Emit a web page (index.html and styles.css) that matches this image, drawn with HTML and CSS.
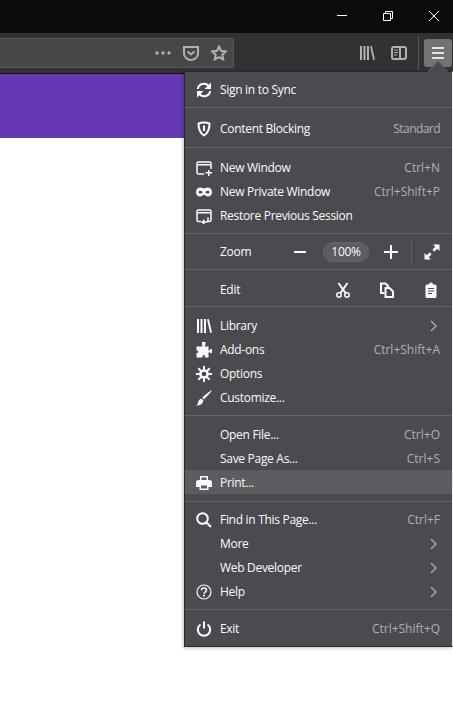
FILE: index.html
```html
<!DOCTYPE html>
<html lang="en">
<head>
<meta charset="utf-8">
<title>Menu</title>
<link rel="stylesheet" href="styles.css">
</head>
<body>
<div class="titlebar">
  <svg class="cap" viewBox="0 0 46 33" width="46" height="33"><path d="M18 15.500h10" stroke="#fff" fill="none"/></svg>
  <svg class="cap" viewBox="0 0 46 33" width="46" height="33"><path d="M18.500 13.500h7v7h-7zM20.500 13.500v-2h7v7h-2" stroke="#fff" fill="none"/></svg>
  <svg class="cap" viewBox="0 0 46 33" width="46" height="33"><path d="M18 11l10 10M28 11L18 21" stroke="#fff" fill="none"/></svg>
</div>
<div class="toolbar">
  <div class="urlbar">
    <svg class="tb-icon" viewBox="0 0 16 16"><circle cx="2" cy="8" r="1.700"/><circle cx="8" cy="8" r="1.700"/><circle cx="14" cy="8" r="1.700"/></svg>
    <svg class="tb-icon" viewBox="0 0 16 16"><path class="ln2" d="M1 2h14v6.500a7 6.500 0 0 1-14 0z"/><path class="ln2" d="M4.500 6.500L8 9.500l3.500-3"/></svg>
    <svg class="tb-icon" viewBox="0 0 16 16"><path class="ln2" d="M8 1.500l2 4.300 4.800.6-3.500 3.300.9 4.700L8 12.100l-4.200 2.300.9-4.700L1.200 6.400 6 5.800z"/></svg>
  </div>
  <div class="tb-right">
    <svg class="tb-icon lib" viewBox="0 0 16 16"><path d="M1 1h2v14H1zM4.500 1h2v14h-2zM8 1h2v14H8zM11 1.500l1.800-.6 3.200 13.500-1.800.6z"/></svg>
    <svg class="tb-icon side" viewBox="0 0 16 16"><rect class="ln2" x="1" y="2" width="14" height="12" rx="2"/><path class="ln2" d="M9 2v12"/><path d="M3 4.500h4v1H3zM3 7h4v1H3zM3 9.500h3v1H3z"/></svg>
    <div class="tb-sep"></div>
    <div class="hamburger"><span></span><span></span><span></span></div>
  </div>
</div>
<div class="banner"></div>

<div class="arrow"></div>
<nav class="menu">
  <section class="group g1">
    <div class="row"><svg class="ic" viewBox="0 0 16 16"><path class="ln2" d="M1.800 7a6.200 6.200 0 0 1 10.700-3.300M14.200 9a6.200 6.200 0 0 1-10.700 3.300"/><path d="M15 .5v6.500H8.500zM1 15.500V9h6.500z"/></svg><span class="label">Sign in to Sync</span></div>
  </section>
  <section class="group g2">
    <div class="row"><svg class="ic" viewBox="0 0 16 16"><path class="ln2" d="M8 1.500c2 0 4 .4 5.500 1.200 0 5.300-1.500 9.300-5.500 11.800-4-2.500-5.500-6.500-5.500-11.800C4 1.900 6 1.500 8 1.500z"/><path d="M7 4.500h2v5.500H7z"/></svg><span class="label">Content Blocking</span><span class="hint std">Standard</span></div>
  </section>
  <section class="group g3">
    <div class="row"><svg class="ic" viewBox="0 0 16 16"><path class="ln15" d="M8 14H2.500A1.500 1.500 0 0 1 1 12.500v-9A1.500 1.500 0 0 1 2.500 2h11A1.500 1.500 0 0 1 15 3.500V9"/><path d="M1 4h14v1.500H1zM12 10h1.500v2H16v1.500h-2.500V16H12v-2.500H9.500V12H12z"/></svg><span class="label">New Window</span><span class="hint">Ctrl+N</span></div>
    <div class="row"><svg class="ic" viewBox="0 0 16 16"><path fill-rule="evenodd" d="M4.500 3.500C6 3.500 7 4.500 8 4.500s2-1 3.500-1C14 3.500 16 5 16 8s-2 4.500-4 4.500c-2 0-3-1.800-4-1.800s-2 1.800-4 1.800c-2 0-4-1.500-4-4.500s2-4.500 4.500-4.500zM4.500 6.800c-1.200 0-2 .6-2 1.400S3.500 9.500 4.500 9.500s2-.7 2-1.300-.8-1.400-2-1.400zM11.500 6.800c-1.200 0-2 .8-2 1.400s1 1.300 2 1.300 2-.5 2-1.300-.8-1.400-2-1.400z"/></svg><span class="label">New Private Window</span><span class="hint">Ctrl+Shift+P</span></div>
    <div class="row"><svg class="ic" viewBox="0 0 16 16"><path class="ln15" d="M5 13.500H2.500A1.500 1.500 0 0 1 1 12V3.500A1.500 1.500 0 0 1 2.500 2h11A1.500 1.500 0 0 1 15 3.500V12a1.500 1.500 0 0 1-1.500 1.500H12"/><path d="M1 4h14v1.500H1z"/><path class="ln15" d="M12 9.500V12.500a1.500 1.500 0 0 1-1.500 1.500H7"/><path d="M8.500 11v6l-3.500-3z"/></svg><span class="label">Restore Previous Session</span></div>
  </section>
  <section class="group g4">
    <div class="row"><span class="label">Zoom</span>
      <div class="tools">
        <svg class="ic minus" viewBox="0 0 16 16"><path d="M2 7h12v2H2z"/></svg>
        <span class="pill">100%</span>
        <svg class="ic plus" viewBox="0 0 16 16"><path d="M7 1h2v6h6v2H9v6H7V9H1V7h6z"/></svg>
        <span class="vsep"></span>
        <svg class="ic full" viewBox="0 0 16 16"><path d="M9 0.500h6.500V7l-2.300-2.300-3 3L8.300 5.800l3-3zM7 15.500H.5V9l2.300 2.300 3-3 1.900 1.900-3 3z"/></svg>
      </div>
    </div>
  </section>
  <section class="group g5">
    <div class="row"><span class="label">Edit</span>
      <div class="tools edit">
        <svg class="ic" viewBox="0 0 16 16"><path class="ln2" d="M3.500 1l7 10M12.500 1l-7 10"/><circle class="ln15" cx="4" cy="13" r="2.200"/><circle class="ln15" cx="12" cy="13" r="2.200"/></svg>
        <svg class="ic" viewBox="0 0 16 16"><path class="ln2" d="M5.500 11H2V1.500h4.500L9 4v1.500"/><path class="ln2" d="M6.500 6h4L14 9.500V15H6.500z"/></svg>
        <svg class="ic" viewBox="0 0 16 16"><path fill-rule="evenodd" d="M4 2.500h2a2 2 0 0 1 4 0h2A1.500 1.500 0 0 1 13.500 4v10.500A1.500 1.500 0 0 1 12 16H4a1.500 1.500 0 0 1-1.500-1.500V4A1.500 1.500 0 0 1 4 2.500zM5 6v1h6V6zM5 8.500v1h6v-1zM5 11v1h4v-1z"/></svg>
      </div>
    </div>
  </section>
  <section class="group g6">
    <div class="row"><svg class="ic" viewBox="0 0 16 16"><path d="M1 1h2v14H1zM4.500 1h2v14h-2zM8 1h2v14H8zM11 1.500l1.800-.6 3.200 13.500-1.800.6z"/></svg><span class="label">Library</span><svg class="chev" viewBox="0 0 8 12"><path d="M1 1l5 5-5 5"/></svg></div>
    <div class="row"><svg class="ic" viewBox="0 0 16 16"><path d="M6 0h3.500v3H9c-.5 0-.5 1.500 0 1.500h3.500V8c0 .5 1.500.5 1.500 0V7h2v4h-2v-.5c0-.5-1.500-.5-1.500 0V15.500H9v-1.500c0-1-2.500-1-2.500 0v1.500H.5V11h1c1 0 1-2.500 0-2.500h-1v-4H6c.5 0 .5-1.500 0-1.500z"/></svg><span class="label">Add-ons</span><span class="hint">Ctrl+Shift+A</span></div>
    <div class="row"><svg class="ic" viewBox="0 0 16 16"><circle class="ln25" cx="8" cy="8" r="3.600"/><path class="ln2" d="M8 0v3.500M8 12.500V16M0 8h3.500M12.500 8H16M2.300 2.300l2.500 2.500M11.200 11.200l2.500 2.500M13.700 2.300l-2.500 2.500M4.800 11.200l-2.500 2.500"/></svg><span class="label">Options</span></div>
    <div class="row"><svg class="ic" viewBox="0 0 16 16"><path d="M16 0.200c.3.400-5.200 6.800-8 9.200L6.300 7.800C8.500 5 15.500-.2 16 .2zM5.500 8.700l1.800 1.800c0 3-3 5-7.300 5.300 2-1 1.700-3 2.500-4.800.5-1.300 1.500-2.300 3-2.300z"/></svg><span class="label">Customize...</span></div>
  </section>
  <section class="group g7">
    <div class="row"><span class="label">Open File...</span><span class="hint">Ctrl+O</span></div>
    <div class="row"><span class="label">Save Page As...</span><span class="hint">Ctrl+S</span></div>
    <div class="row active"><svg class="ic" viewBox="0 0 16 16"><path fill-rule="evenodd" d="M4 1h8v4h1.500A2.500 2.500 0 0 1 16 7.500V12h-3.500v3h-9v-3H0V7.500A2.500 2.500 0 0 1 2.500 5H4zM5.500 2.500V5h5V2.500zM5 10.500v3h6v-3z"/></svg><span class="label">Print...</span></div>
  </section>
  <section class="group g8">
    <div class="row"><svg class="ic" viewBox="0 0 16 16"><path class="ln2" d="M6.500 1.200a5.300 5.300 0 1 1 0 10.600 5.300 5.300 0 0 1 0-10.600zM10.500 10.500L15 15"/></svg><span class="label">Find in This Page...</span><span class="hint">Ctrl+F</span></div>
    <div class="row"><span class="label">More</span><svg class="chev" viewBox="0 0 8 12"><path d="M1 1l5 5-5 5"/></svg></div>
    <div class="row"><span class="label">Web Developer</span><svg class="chev" viewBox="0 0 8 12"><path d="M1 1l5 5-5 5"/></svg></div>
    <div class="row"><svg class="ic" viewBox="0 0 16 16"><circle class="ln1" cx="8" cy="8" r="7"/><path class="ln15" d="M5.500 6.200C5.500 4.700 6.700 4 8 4s2.500.8 2.500 2.100c0 2-2.500 1.900-2.500 3.700"/><path d="M7.100 10.800h1.800v1.800H7.100z"/></svg><span class="label">Help</span><svg class="chev" viewBox="0 0 8 12"><path d="M1 1l5 5-5 5"/></svg></div>
  </section>
  <section class="group g9">
    <div class="row"><svg class="ic" viewBox="0 0 16 16"><path class="ln2" d="M4.500 3.500a6.200 6.200 0 1 0 7 0M8 .5v7"/></svg><span class="label">Exit</span><span class="hint">Ctrl+Shift+Q</span></div>
  </section>
</nav>
</body>
</html>
```
FILE: styles.css
```css
* { box-sizing: border-box; }
html, body { margin: 0; height: 100%; overflow: hidden; background: #fff; }
body { font-family: "Open Sans", "Noto Sans", sans-serif; font-size: 12px; }

.titlebar { height: 33px; background: #0c0c0c; display: flex; justify-content: flex-end; margin-right: -4px; }
.cap { display: block; }

.toolbar { background: #323234; display: flex; align-items: center; justify-content: space-between; border-bottom: 1px solid #0c0c0d; height: 41px; }
.urlbar { width: 234px; height: 30px; margin-top: -1px; background: #474749; border: 1px solid #58585a; border-left: 0; border-radius: 0 2px 2px 0; display: flex; align-items: center; justify-content: flex-end; gap: 12px; padding-right: 6px; }
.tb-icon { width: 16px; height: 16px; fill: #b1b1b3; }
.tb-right { display: flex; align-items: center; height: 100%; padding-right: 1px; }
.lib { margin-right: 16px; }
.side { margin-right: 11px; }
.tb-sep { width: 1px; height: 34px; background: #57575a; margin-right: 5px; }
.hamburger { width: 28px; height: 28px; background: #737373; border-radius: 3px; display: flex; flex-direction: column; align-items: center; justify-content: center; gap: 3px; margin-top: -1px; }
.hamburger span { display: block; width: 12px; height: 2px; background: #e4e4e4; }
.ln2, .ln15, .ln1, .ln25 { fill: none; stroke: #b1b1b3; stroke-width: 2; }

.banner { height: 64px; background: #6439b3; }

.arrow { position: absolute; left: 431px; top: 64px; width: 14px; height: 14px; background: #4a4a4f; transform: rotate(45deg); border: 1px solid #5a5a5e; border-right: 0; border-bottom: 0; z-index: 3; }
.menu { position: absolute; left: 184px; top: 71px; width: 269px; height: 576px; background: #4a4a4f; color: #fbfbfe; border: 1px solid #2a2a2e; border-right-color: #f0f0f0; box-shadow: -1px 1px 3px rgba(0,0,0,.25); z-index: 2; overflow: hidden; }
.group { border-bottom: 1px solid #636367; padding: 6px 0; }
.group:last-child { border-bottom: 0; }
.g1 { padding: 5px 0 6px; }
.g2 { padding: 8px 0 7px; }
.g3 { padding: 7px 0 6px; }
.g4 { padding: 5px 0 6px; }
.g5 { padding: 7px 0 5px; }
.g7 { padding: 6px 0 7px; }
.g8 { padding: 5px 0 6px; }
.row { height: 24px; display: flex; align-items: center; padding: 1px 12px 0 35px; position: relative; letter-spacing: -.3px; }
.row.active { background: #5c5c61; }
.row > .ic:first-child { position: absolute; left: 11px; top: 5px; }
.ic { width: 16px; height: 16px; fill: #fbfbfe; flex: none; }
.ic .ln2, .ic .ln15, .ic .ln1, .ic .ln25 { stroke: #fbfbfe; }
.ic .ln15 { stroke-width: 1.500; }
.ic .ln1 { stroke-width: 1.200; }
.ic .ln25 { stroke-width: 2.500; }
.label { flex: 1; white-space: nowrap; }
.hint { color: #b1b1b3; white-space: nowrap; letter-spacing: 0; }
.std { letter-spacing: -.55px; }
.chev { width: 8px; height: 12px; fill: none; stroke: #b1b1b3; stroke-width: 1.300; margin-right: 2px; }
.tools { display: flex; align-items: center; position: relative; }
.pill { width: 46px; height: 20px; border-radius: 10px; background: #5c5c61; border: 1px solid #66666a; display: flex; align-items: center; justify-content: center; margin: 0 14px 0 15px; letter-spacing: -.3px; }
.vsep { width: 1px; height: 24px; background: #5c5c61; margin: 0 12px 0 12px; }
.edit { gap: 28px; margin-right: 1px; }
```
